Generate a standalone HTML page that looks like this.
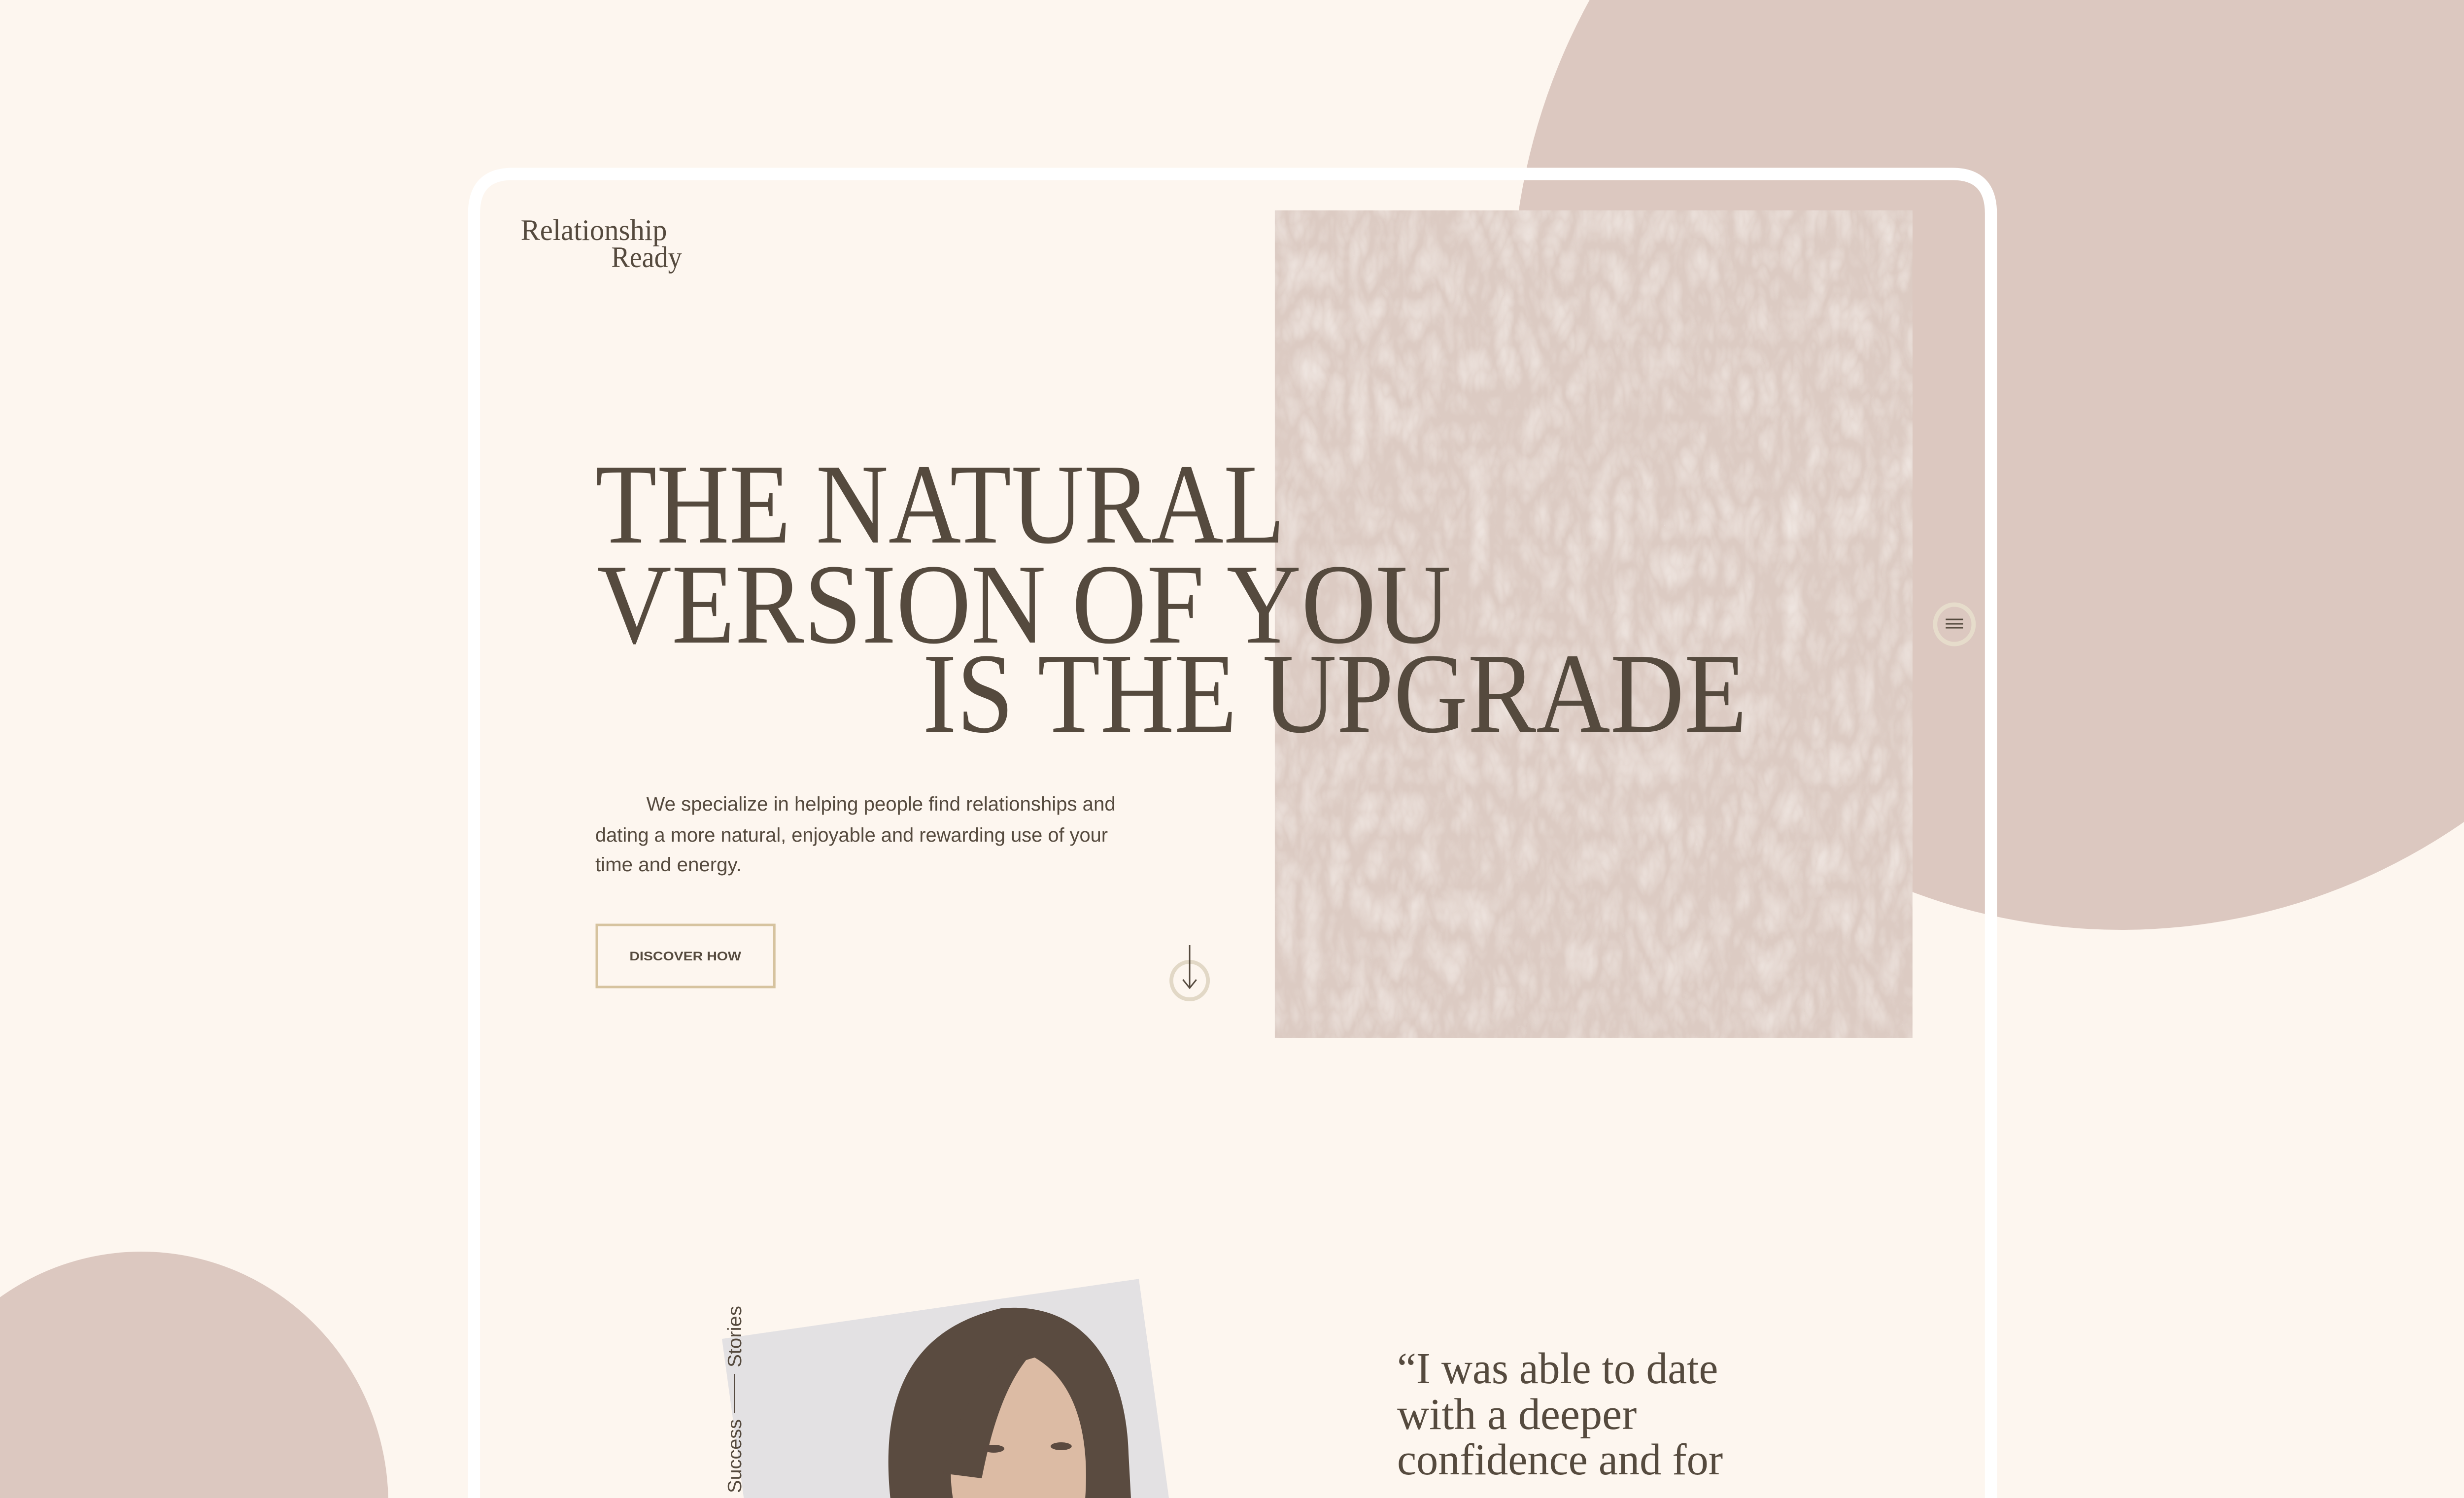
<!DOCTYPE html>
<html><head><meta charset="utf-8"><style>
html,body{margin:0;padding:0;background:#fdf6ef;width:100%;height:3040px;overflow:hidden}
svg{display:block;position:absolute;left:0;top:0;width:100vw;height:3040px}
</style></head><body>
<svg viewBox="0 0 5120 3040" preserveAspectRatio="none" xmlns="http://www.w3.org/2000/svg">
<defs>
<filter id="tex" x="0" y="0" width="100%" height="100%">
<feTurbulence type="turbulence" baseFrequency="0.02 0.01" numOctaves="3" seed="5" result="n"/>
<feColorMatrix in="n" type="matrix" values="0 0 0 0 0.95  0 0 0 0 0.91  0 0 0 0 0.88  1.2 0 0 0 -0.15"/>
</filter>
<clipPath id="pc"><rect x="1500" y="2717" width="875" height="1200"/></clipPath>
<clipPath id="all"><rect x="0" y="0" width="5120" height="3040"/></clipPath>
</defs>
<g clip-path="url(#all)">
<rect width="5120" height="3040" fill="#fdf6ef"/>
<circle cx="4408" cy="620" r="1267" fill="#dcc8c0"/>
<circle cx="294" cy="3053" r="513" fill="#dcc8c0"/>
<path d="M985,3040 L985,433 Q985,353 1065,353 L4057,353 Q4137,353 4137,433 L4137,3040" fill="none" stroke="#ffffff" stroke-width="25"/>
<rect x="2649" y="427" width="1325" height="1679" fill="#dccbc3"/>
<rect x="2649" y="427" width="1325" height="1679" fill="#dccbc3" filter="url(#tex)" opacity="0.7"/>
<g fill="#554a3e" font-family="Liberation Serif, serif" font-size="60">
<text x="1082" y="487" textLength="304" lengthAdjust="spacingAndGlyphs">Relationship</text>
<text x="1270" y="542" textLength="147" lengthAdjust="spacingAndGlyphs">Ready</text>
</g>
<g fill="#554a3e" font-family="Liberation Serif, serif" font-size="232">
<text x="1237" y="1101" textLength="1433" lengthAdjust="spacingAndGlyphs">THE NATURAL</text>
<text x="1240" y="1304" textLength="1775" lengthAdjust="spacingAndGlyphs">VERSION OF YOU</text>
<text x="1917" y="1485" textLength="1713" lengthAdjust="spacingAndGlyphs">IS THE UPGRADE</text>
</g>
<g fill="#554a3e" font-family="Liberation Sans, sans-serif" font-size="40">
<text x="1343" y="1645" textLength="975" lengthAdjust="spacingAndGlyphs">We specialize in helping people find relationships and</text>
<text x="1237" y="1708" textLength="1065" lengthAdjust="spacingAndGlyphs">dating a more natural, enjoyable and rewarding use of your</text>
<text x="1237" y="1768" textLength="304" lengthAdjust="spacingAndGlyphs">time and energy.</text>
</g>
<rect x="1240" y="1877" width="369" height="126" fill="none" stroke="#d6c39f" stroke-width="5"/>
<text x="1308" y="1949" textLength="232" lengthAdjust="spacingAndGlyphs" fill="#554a3e" font-family="Liberation Sans, sans-serif" font-size="25" font-weight="bold">DISCOVER HOW</text>
<circle cx="2472" cy="1990" r="38" fill="none" stroke="#e2d8c6" stroke-width="8"/>
<line x1="2472" y1="1918" x2="2472" y2="2004" stroke="#554a3e" stroke-width="3"/>
<polyline points="2458,1988 2472,2005 2486,1988" fill="none" stroke="#554a3e" stroke-width="3"/>
<circle cx="4061" cy="1267" r="40" fill="none" stroke="#e6dccb" stroke-width="9"/>
<g stroke="#554a3e" stroke-width="3"><line x1="4043" y1="1257" x2="4079" y2="1257"/><line x1="4043" y1="1266" x2="4079" y2="1266"/><line x1="4043" y1="1274" x2="4079" y2="1274"/></g>
<g transform="rotate(-8 1500 2717)">
<g clip-path="url(#pc)">
<rect x="1500" y="2717" width="875" height="1200" fill="#e3e1e3"/>
</g>
</g>
<path d="M1850,3040 C1830,2850 1880,2700 2080,2655 C2260,2640 2340,2780 2345,2950 L2350,3040 Z" fill="#5a4b40"/>
<path d="M1980,3040 C1960,2920 2010,2790 2150,2755 C2230,2800 2265,2900 2255,3040 Z" fill="#dcbba4"/>
<path d="M1960,2990 C1990,2860 2050,2760 2150,2740 C2090,2800 2060,2900 2040,3000 Z" fill="#5a4b40"/>
<ellipse cx="2065" cy="2940" rx="22" ry="8" fill="#5b4a40"/>
<ellipse cx="2205" cy="2935" rx="22" ry="8" fill="#5b4a40"/>
<g transform="translate(1540 3030) rotate(-90)" fill="#554a3e" font-family="Liberation Sans, sans-serif" font-size="40">
<text x="0" y="0" textLength="150" lengthAdjust="spacingAndGlyphs">Success</text>
<line x1="162" y1="-14" x2="242" y2="-14" stroke="#554a3e" stroke-width="2"/>
<text x="255" y="0" textLength="125" lengthAdjust="spacingAndGlyphs">Stories</text>
</g>
<g fill="#554a3e" font-family="Liberation Serif, serif" font-size="90">
<text x="2903" y="2807" textLength="667" lengthAdjust="spacingAndGlyphs">“I was able to date</text>
<text x="2903" y="2900" textLength="498" lengthAdjust="spacingAndGlyphs">with a deeper</text>
<text x="2903" y="2992" textLength="677" lengthAdjust="spacingAndGlyphs">confidence and for</text>
</g>
</g>
</svg>
</body></html>
